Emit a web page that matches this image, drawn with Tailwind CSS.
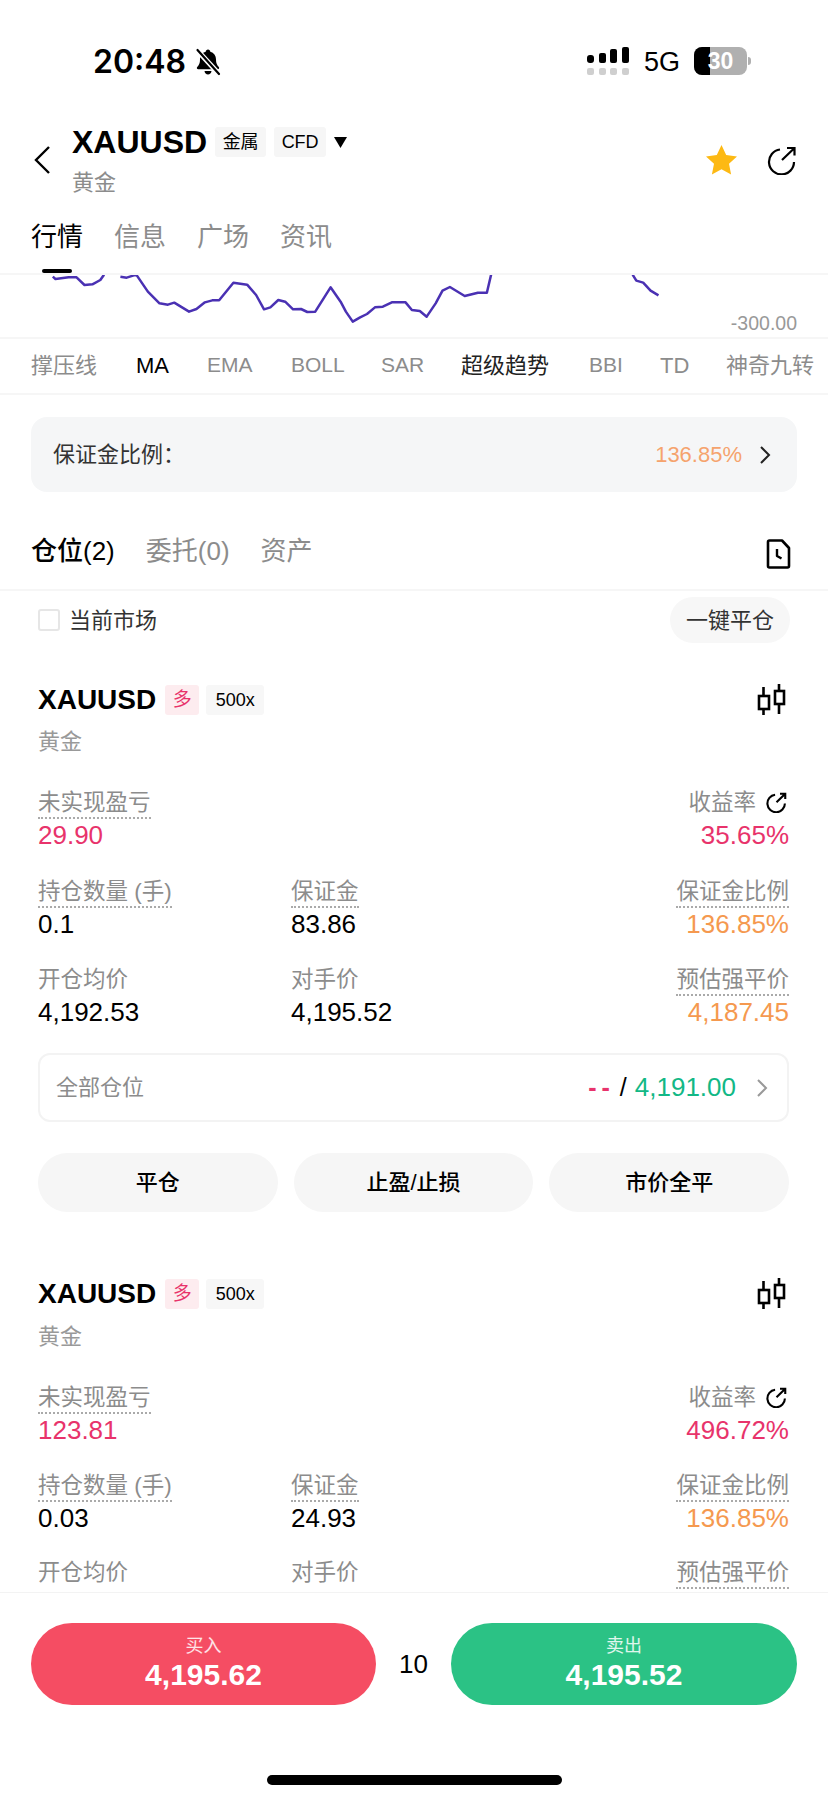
<!DOCTYPE html>
<html lang="zh-CN">
<head>
    <meta charset="UTF-8">
    <meta name="viewport" content="width=device-width, initial-scale=1.0">
    <script src="https://cdn.jsdelivr.net/npm/@tailwindcss/browser@4"></script>
    <title>XAUUSD</title>
</head>
<body class="bg-white">
<div class="w-[828px] h-[1800px] flex flex-col overflow-hidden bg-white text-black font-['Liberation_Sans','Noto_Sans_CJK_SC',sans-serif]">

    <!-- status bar -->
    <div class="h-[124px] shrink-0 flex items-center pl-[93px] pr-[77px]">
        <span class="font-['Inter'] font-semibold text-[32px] leading-none">20:48</span>
        <svg class="ml-[8px]" width="28" height="28" viewBox="0 0 28 28" fill="#000">
            <path d="M14 1.5c1.3 0 2.2 1 2.3 2.2 3.6 1 5.7 4 5.700 7.800 0 3.500.9 5.600 2.800 7.600.8.9.2 2.100-1 2.100H4.200c-1.200 0-1.800-1.200-1-2.100C5.100 17.100 6 15 6 11.500c0-3.800 2.100-6.800 5.700-7.800.1-1.200 1-2.200 2.300-2.200z"/>
            <path d="M10.500 23h7c-.2 2-1.700 3.500-3.500 3.500S10.700 25 10.500 23z"/>
            <path d="M3 2l22 24" stroke="#fff" stroke-width="5"/>
            <path d="M3.500 2l21.500 24" stroke="#000" stroke-width="2.200" stroke-linecap="round"/>
        </svg>
        <div class="ml-auto flex items-center">
            <div class="flex flex-col gap-[5px] mb-[2px]">
                <div class="flex items-end gap-[4.500px] h-[16px]">
                    <div class="w-[7px] h-[8px] rounded-[3px] bg-black"></div>
                    <div class="w-[7px] h-[10px] rounded-[2px] bg-black"></div>
                    <div class="w-[7px] h-[14px] rounded-[2px] bg-black"></div>
                    <div class="w-[7px] h-[16px] rounded-[2px] bg-black"></div>
                </div>
                <div class="flex gap-[4.500px]">
                    <div class="w-[7px] h-[7px] rounded-[2px] bg-[#cfcfcf]"></div>
                    <div class="w-[7px] h-[7px] rounded-[2px] bg-[#cfcfcf]"></div>
                    <div class="w-[7px] h-[7px] rounded-[2px] bg-[#cfcfcf]"></div>
                    <div class="w-[7px] h-[7px] rounded-[2px] bg-[#cfcfcf]"></div>
                </div>
            </div>
            <span class="ml-[15px] text-[27px] leading-none">5G</span>
            <div class="ml-[14px] mb-[2px] relative w-[53px] h-[28px] rounded-[8px] bg-[#b0b0b0] overflow-hidden flex items-center justify-center">
                <div class="absolute left-0 top-0 bottom-0 w-[16px] bg-black"></div>
                <span class="relative text-white font-bold text-[23px] leading-none">30</span>
            </div>
            <div class="ml-[1px] mb-[2px] w-[3px] h-[8px] rounded-r-full bg-[#b0b0b0]"></div>
        </div>
    </div>

    <!-- header -->
    <div class="h-[76px] shrink-0 flex pl-[33px] pr-[31px]">
        <svg class="mt-[21px]" width="18" height="30" viewBox="0 0 18 30" fill="none" stroke="#000" stroke-width="2.400"><path d="M16 2L3 15l13 13"/></svg>
        <div class="ml-[21px]">
            <div class="flex items-center h-[32px] mt-[2px]">
                <span class="text-[32px] leading-none font-semibold">XAUUSD</span>
                <span class="ml-[8px] h-[30px] w-[51px] flex items-center justify-center rounded-[3px] bg-[#f6f6f6] text-[18px]">金属</span>
                <span class="ml-[8px] h-[30px] w-[52px] flex items-center justify-center rounded-[3px] bg-[#f6f6f6] text-[18px]">CFD</span>
                <svg class="ml-[7px]" width="15" height="11" viewBox="0 0 15 11" fill="#000"><path d="M1 0h13L7.500 11z"/></svg>
            </div>
            <div class="mt-[10px] text-[22px] leading-[30px] text-[#8c8c8c]">黄金</div>
        </div>
        <svg class="ml-auto mt-[20px]" width="33" height="32" viewBox="0 0 33 32" fill="#fdb913"><path d="M16.500 1l4.700 10 10.800 1.400-8 7.400 2.100 10.700-9.600-5.300-9.600 5.300 2.100-10.700-8-7.400L11.800 11z"/></svg>
        <svg class="ml-[29px] mt-[22px]" width="30" height="29" viewBox="0 0 30 29" fill="none" stroke="#000" stroke-width="2.200"><path d="M13 3.500A12.500 12.500 0 1 0 27 16"/><path d="M15 14L27.500 2M20 2h7.500v7.500"/></svg>
    </div>

    <!-- main tabs -->
    <div class="relative h-[75px] shrink-0 flex gap-[31px] pl-[31px] pt-[21px] text-[26px] leading-[32px] text-[#8c8c8c] border-b-2 border-[#f6f6f6]">
        <span class="text-black">行情</span>
        <span>信息</span>
        <span>广场</span>
        <span>资讯</span>
        <div class="absolute left-[42px] bottom-0 w-[30px] h-[4px] rounded-full bg-black"></div>
    </div>

    <!-- chart strip -->
    <div class="relative h-[64px] shrink-0 overflow-hidden border-b-2 border-[#f6f6f6]">
        <svg class="block w-[828px] h-[62px]" viewBox="0 45 1568 186" preserveAspectRatio="none" fill="none">
            <path vector-effect="non-scaling-stroke" stroke="#4a31b3" stroke-width="2.500" stroke-linejoin="round" d="M100 50L105 57L130 52L145 52L160 75L175 73L190 60L197 44M228 50L240 53L258 44L280 95L302 130L318 134L330 128L358 155L372 147L388 127L402 121L415 121L442 68L468 74L485 105L500 148L512 142L527 120L540 125L555 148L570 147L582 156L597 155L626 82L645 125L655 155L668 185L682 172L695 162L710 142L725 140L742 127L768 127L780 150L795 153L808 170L825 130L838 92L852 81L880 108L905 98L922 98L930 44M1198 44L1205 62L1218 68L1232 92L1247 106"/>
        </svg>
        <span class="absolute right-[31px] top-[37px] text-[19.500px] leading-[22px] text-[#999]">-300.00</span>
    </div>

    <!-- indicators -->
    <div class="h-[56px] shrink-0 flex items-center pl-[31px] pb-[2px] text-[22px] text-[#8c8c8c] whitespace-nowrap border-b-2 border-[#f6f6f6]">
        <span class="w-[105px]">撑压线</span>
        <span class="w-[71px] text-black">MA</span>
        <span class="w-[84px] text-[21px]">EMA</span>
        <span class="w-[90px] text-[21px]">BOLL</span>
        <span class="w-[80px] text-[21px]">SAR</span>
        <span class="w-[128px] text-[#222]">超级趋势</span>
        <span class="w-[71px] text-[21px]">BBI</span>
        <span class="w-[66px]">TD</span>
        <span>神奇九转</span>
    </div>

    <!-- margin ratio -->
    <div class="mt-[22px] mx-[31px] h-[75px] shrink-0 flex items-center pl-[22px] pr-[26px] rounded-[16px] bg-[#f5f6f7] text-[22px]">
        <span class="text-[#333]">保证金比例：</span>
        <span class="ml-auto text-[#f5a36d]">136.85%</span>
        <svg class="ml-[17px]" width="12" height="20" viewBox="0 0 12 20" fill="none" stroke="#222" stroke-width="2"><path d="M2 2l8 8-8 8"/></svg>
    </div>

    <!-- position tabs -->
    <div class="h-[99px] shrink-0 flex items-center pl-[31px] pr-[37px] pt-[22px] text-[26px] text-[#8c8c8c] border-b-2 border-[#f6f6f6]">
        <span class="text-black font-medium">仓位(2)</span>
        <span class="ml-[31px]">委托(0)</span>
        <span class="ml-[31px]">资产</span>
        <svg class="ml-auto mt-[5px]" width="25" height="30" viewBox="0 0 25 30" fill="none" stroke="#000" stroke-width="2.600" stroke-linejoin="round"><path d="M2 3a1.500 1.500 0 0 1 1.500-1.500H16L23 9v18a1.500 1.500 0 0 1-1.500 1.500h-18A1.500 1.500 0 0 1 2 27z"/><path d="M11 10v7l4.500 2.500" stroke-width="2.400"/></svg>
    </div>

    <!-- current market filter -->
    <div class="h-[52px] shrink-0 mt-[3px] flex items-center pl-[38px] pr-[38px] text-[22px] text-[#333]">
        <span class="w-[22px] h-[22px] rounded-[3px] border-2 border-[#e6e6e6]"></span>
        <span class="ml-[9px]">当前市场</span>
        <span class="ml-auto h-[46px] w-[120px] flex items-center justify-center rounded-full bg-[#f7f7f7]">一键平仓</span>
    </div>

    <div class="flex-1 min-h-0 overflow-hidden">
        <!-- position 1 -->
        <div class="mt-[39px] pl-[38px] pr-[39px]">
            <div class="flex items-center h-[30px]">
                <span class="text-[28px] leading-none font-semibold">XAUUSD</span>
                <span class="ml-[9px] w-[34px] h-[30px] flex items-center justify-center rounded-[3px] bg-[#fdecef] text-[#e8336b] text-[19px]">多</span>
                <span class="ml-[7px] w-[58px] h-[30px] flex items-center justify-center rounded-[3px] bg-[#f7f7f7] text-[18px]">500x</span>
                <svg class="ml-auto mr-[2px] overflow-visible" width="30" height="32" viewBox="0 0 30 32" fill="none" stroke="#000" stroke-width="2.600"><path d="M6.500 3v28M22 0v30"/><rect x="2" y="12" width="10" height="13" fill="#fff"/><rect x="18" y="7" width="9" height="13" fill="#fff"/></svg>
            </div>
            <div class="mt-[12px] text-[22px] leading-[30px] text-[#999]">黄金</div>

            <div class="mt-[31px] flex justify-between">
                <div>
                    <div class="text-[22.500px] leading-[29px] text-[#8c8c8c] border-b-2 border-dotted border-[#aaa] w-fit">未实现盈亏</div>
                    <div class="text-[26px] leading-[32px] text-[#e8336b]">29.90</div>
                </div>
                <div class="flex flex-col items-end">
                    <div class="flex items-center text-[22.500px] leading-[29px] text-[#8c8c8c] border-b-2 border-transparent">收益率
                        <svg class="ml-[10px] mr-[2px]" width="21" height="21" viewBox="0 0 30 29" fill="none" stroke="#000" stroke-width="3"><path d="M13 3.500A12.500 12.500 0 1 0 27 16"/><path d="M15 14L27.500 2M20 2h7.500v7.500"/></svg>
                    </div>
                    <div class="text-[26px] leading-[32px] text-[#e8336b]">35.65%</div>
                </div>
            </div>

            <div class="mt-[26px] grid grid-cols-[253px_1fr_auto]">
                <div>
                    <div class="text-[22.500px] leading-[29px] text-[#8c8c8c] border-b-2 border-dotted border-[#aaa] w-fit">持仓数量 (手)</div>
                    <div class="text-[26px] leading-[32px]">0.1</div>
                </div>
                <div>
                    <div class="text-[22.500px] leading-[29px] text-[#8c8c8c] border-b-2 border-dotted border-[#aaa] w-fit">保证金</div>
                    <div class="text-[26px] leading-[32px]">83.86</div>
                </div>
                <div class="flex flex-col items-end">
                    <div class="text-[22.500px] leading-[29px] text-[#8c8c8c] border-b-2 border-dotted border-[#aaa]">保证金比例</div>
                    <div class="text-[26px] leading-[32px] text-[#f5994f]">136.85%</div>
                </div>
            </div>

            <div class="mt-[25px] grid grid-cols-[253px_1fr_auto]">
                <div>
                    <div class="text-[22.500px] leading-[29px] text-[#8c8c8c] border-b-2 border-transparent">开仓均价</div>
                    <div class="text-[26px] leading-[32px]">4,192.53</div>
                </div>
                <div>
                    <div class="text-[22.500px] leading-[29px] text-[#8c8c8c] border-b-2 border-transparent">对手价</div>
                    <div class="text-[26px] leading-[32px]">4,195.52</div>
                </div>
                <div class="flex flex-col items-end">
                    <div class="text-[22.500px] leading-[29px] text-[#8c8c8c] border-b-2 border-dotted border-[#aaa]">预估强平价</div>
                    <div class="text-[26px] leading-[32px] text-[#f5994f]">4,187.45</div>
                </div>
            </div>

            <div class="mt-[25px] h-[69px] flex items-center pl-[16px] pr-[19px] rounded-[12px] border-2 border-[#f3f3f3]">
                <span class="text-[22px] text-[#8c8c8c]">全部仓位</span>
                <span class="ml-auto text-[25px] text-[#e8336b] font-bold tracking-[5px]">--</span>
                <span class="ml-[5px] text-[25px]">/</span>
                <span class="ml-[8px] text-[26px] text-[#12b886]">4,191.00</span>
                <svg class="ml-[20px]" width="12" height="20" viewBox="0 0 12 20" fill="none" stroke="#999" stroke-width="2"><path d="M2 2l8 8-8 8"/></svg>
            </div>

            <div class="mt-[31px] grid grid-cols-3 gap-[16px] text-[22px] font-medium">
                <div class="h-[59px] flex items-center justify-center rounded-full bg-[#f6f6f6]">平仓</div>
                <div class="h-[59px] flex items-center justify-center rounded-full bg-[#f6f6f6]">止盈/止损</div>
                <div class="h-[59px] flex items-center justify-center rounded-full bg-[#f6f6f6]">市价全平</div>
            </div>
        </div>

        <!-- position 2 -->
        <div class="mt-[67px] pl-[38px] pr-[39px]">
            <div class="flex items-center h-[30px]">
                <span class="text-[28px] leading-none font-semibold">XAUUSD</span>
                <span class="ml-[9px] w-[34px] h-[30px] flex items-center justify-center rounded-[3px] bg-[#fdecef] text-[#e8336b] text-[19px]">多</span>
                <span class="ml-[7px] w-[58px] h-[30px] flex items-center justify-center rounded-[3px] bg-[#f7f7f7] text-[18px]">500x</span>
                <svg class="ml-auto mr-[2px] overflow-visible" width="30" height="32" viewBox="0 0 30 32" fill="none" stroke="#000" stroke-width="2.600"><path d="M6.500 3v28M22 0v30"/><rect x="2" y="12" width="10" height="13" fill="#fff"/><rect x="18" y="7" width="9" height="13" fill="#fff"/></svg>
            </div>
            <div class="mt-[13px] text-[22px] leading-[30px] text-[#999]">黄金</div>

            <div class="mt-[31px] flex justify-between">
                <div>
                    <div class="text-[22.500px] leading-[29px] text-[#8c8c8c] border-b-2 border-dotted border-[#aaa] w-fit">未实现盈亏</div>
                    <div class="text-[26px] leading-[32px] text-[#e8336b]">123.81</div>
                </div>
                <div class="flex flex-col items-end">
                    <div class="flex items-center text-[22.500px] leading-[29px] text-[#8c8c8c] border-b-2 border-transparent">收益率
                        <svg class="ml-[10px] mr-[2px]" width="21" height="21" viewBox="0 0 30 29" fill="none" stroke="#000" stroke-width="3"><path d="M13 3.500A12.500 12.500 0 1 0 27 16"/><path d="M15 14L27.500 2M20 2h7.500v7.500"/></svg>
                    </div>
                    <div class="text-[26px] leading-[32px] text-[#e8336b]">496.72%</div>
                </div>
            </div>

            <div class="mt-[25px] grid grid-cols-[253px_1fr_auto]">
                <div>
                    <div class="text-[22.500px] leading-[29px] text-[#8c8c8c] border-b-2 border-dotted border-[#aaa] w-fit">持仓数量 (手)</div>
                    <div class="text-[26px] leading-[32px]">0.03</div>
                </div>
                <div>
                    <div class="text-[22.500px] leading-[29px] text-[#8c8c8c] border-b-2 border-dotted border-[#aaa] w-fit">保证金</div>
                    <div class="text-[26px] leading-[32px]">24.93</div>
                </div>
                <div class="flex flex-col items-end">
                    <div class="text-[22.500px] leading-[29px] text-[#8c8c8c] border-b-2 border-dotted border-[#aaa]">保证金比例</div>
                    <div class="text-[26px] leading-[32px] text-[#f5994f]">136.85%</div>
                </div>
            </div>

            <div class="mt-[24px] grid grid-cols-[253px_1fr_auto]">
                <div class="text-[22.500px] leading-[29px] text-[#8c8c8c]">开仓均价</div>
                <div class="text-[22.500px] leading-[29px] text-[#8c8c8c]">对手价</div>
                <div class="text-[22.500px] leading-[29px] text-[#8c8c8c] border-b-2 border-dotted border-[#aaa]">预估强平价</div>
            </div>
        </div>
    </div>

    <!-- buy / sell bar -->
    <div class="h-[208px] shrink-0 bg-white border-t border-[#f3f3f3] px-[31px] pt-[30px]">
        <div class="flex items-center">
            <div class="w-[345px] h-[82px] rounded-full bg-[#f54d63] flex flex-col items-center justify-center text-white">
                <span class="text-[18px] leading-[22px] text-white/85">买入</span>
                <span class="text-[30px] leading-[36px] font-semibold">4,195.62</span>
            </div>
            <span class="flex-1 text-center text-[26px]">10</span>
            <div class="w-[346px] h-[82px] rounded-full bg-[#2bc285] flex flex-col items-center justify-center text-white">
                <span class="text-[18px] leading-[22px] text-white/85">卖出</span>
                <span class="text-[30px] leading-[36px] font-semibold">4,195.52</span>
            </div>
        </div>
        <div class="mt-[70px] mx-auto w-[295px] h-[10px] rounded-full bg-black"></div>
    </div>
</div>
</body>
</html>
